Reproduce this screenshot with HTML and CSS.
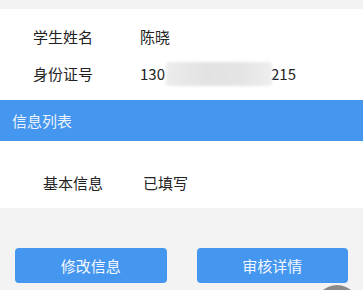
FILE: index.html
```html
<!DOCTYPE html>
<html lang="zh-CN">
<head>
<meta charset="utf-8">
<link rel="stylesheet" href="styles.css">
</head>
<body>
<div class="page">
  <section class="card student">
    <div class="row"><span class="label">学生姓名</span><span class="value">陈晓</span></div>
    <div class="row"><span class="label">身份证号</span><span class="value">130<span class="masked"></span>215</span></div>
  </section>
  <div class="section-title">信息列表</div>
  <section class="card list">
    <div class="row"><span class="label">基本信息</span><span class="value">已填写</span></div>
  </section>
  <div class="actions">
    <button class="btn">修改信息</button>
    <button class="btn">审核详情</button>
  </div>
  <div class="fab"></div>
</div>
</body>
</html>
```
FILE: styles.css
```css
html, body {
  margin: 0;
  padding: 0;
}
body {
  background: #f3f3f3;
  font-family: "Noto Sans CJK SC", "Liberation Sans", sans-serif;
  color: #222;
  width: 363px;
  height: 290px;
  overflow: hidden;
}
.page {
  position: relative;
  height: 290px;
  padding-top: 9px;
  box-sizing: border-box;
  overflow: hidden;
}
.card {
  background: #fff;
}
.student {
  padding: 9px 0 8px 33px;
}
.row {
  display: flex;
  align-items: center;
  height: 37px;
  font-size: 15px;
}
.label {
  width: 107px;
  flex: none;
}
.value {
  display: flex;
  align-items: center;
}
.masked {
  display: inline-block;
  width: 106px;
  height: 24px;
  margin: 0 -1px 0 1px;
  background: linear-gradient(90deg, #ececec, #e2e2e2 40%, #e4e4e4 70%, #eeeeee);
  filter: blur(1.5px);
  border-radius: 3px;
}
.section-title {
  background: #4596ee;
  color: #eaf2fd;
  font-size: 15px;
  height: 41px;
  line-height: 41px;
  padding-left: 12px;
}
.list {
  padding: 23px 0 8px 43px;
}
.list .row {
  height: 36px;
}
.list .label {
  width: 100px;
}
.actions {
  display: flex;
  gap: 30px;
  padding: 0 15px;
  margin-top: 40px;
}
.btn {
  flex: 1;
  height: 35px;
  border: none;
  border-radius: 4px;
  background: #4596ee;
  color: #f4f8ff;
  font-family: "Noto Sans CJK SC", "Liberation Sans", sans-serif;
  font-size: 15px;
  padding: 0;
}
.fab {
  position: absolute;
  left: 315px;
  top: 285px;
  width: 44px;
  height: 44px;
  border-radius: 50%;
  background: #8a8a8a;
}
```
